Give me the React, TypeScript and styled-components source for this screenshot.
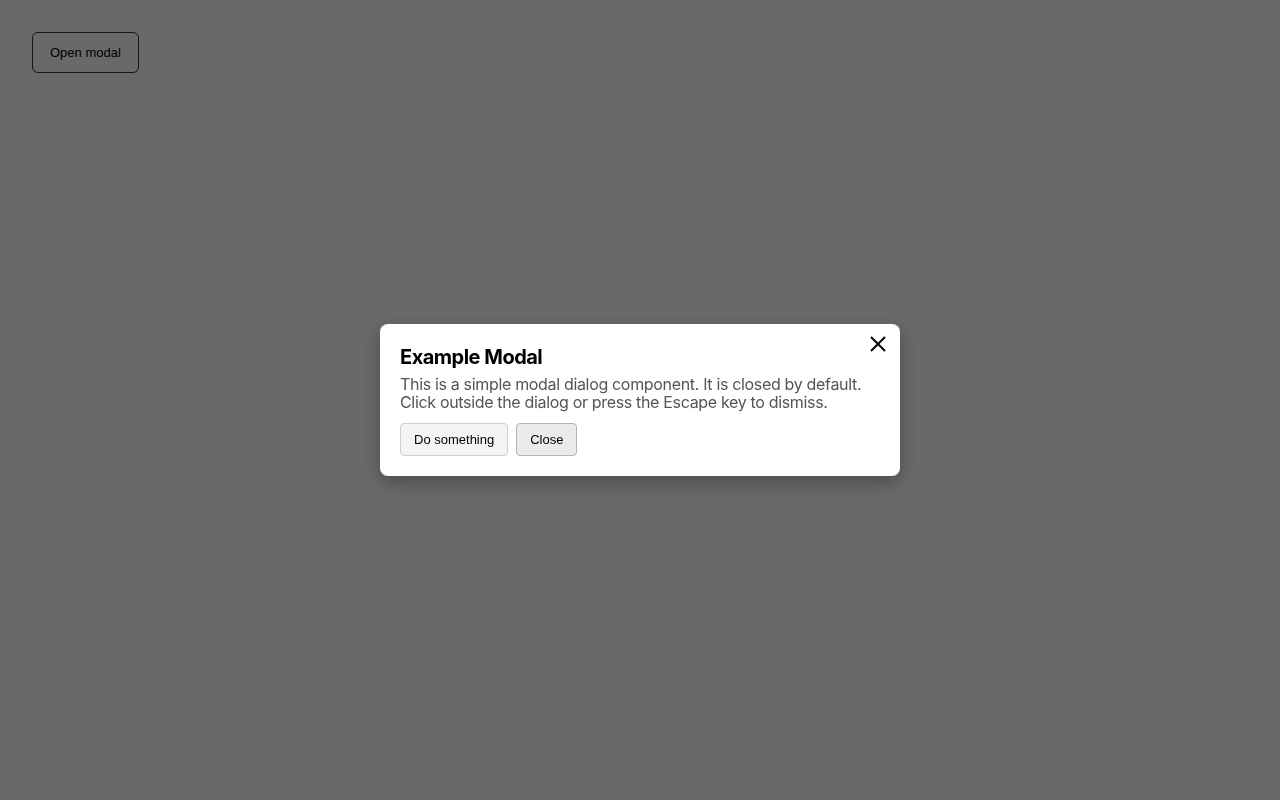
import styled, { createGlobalStyle } from "styled-components";

const Global = createGlobalStyle`
  html, body {
    margin: 0;
    padding: 0;
    height: 100%;
  }
  body {
    background: #ffffff;
    font-family: Inter, "Liberation Sans", sans-serif;
  }
`;

const Page = styled.div`
  position: relative;
  min-height: 800px;
  padding: 32px;
  box-sizing: border-box;
`;

const OpenButton = styled.button`
  height: 41px;
  padding: 0 17px;
  border: 1px solid #333;
  border-radius: 6px;
  background: #fff;
  color: #000;
  font-family: "Liberation Sans", Arial, sans-serif;
  font-size: 13px;
`;

const Backdrop = styled.div`
  position: fixed;
  inset: 0;
  background: rgba(0, 0, 0, 0.59);
  display: flex;
  align-items: center;
  justify-content: center;
`;

const Dialog = styled.div`
  position: relative;
  width: 520px;
  box-sizing: border-box;
  padding: 21px 20px 20px;
  background: #fff;
  border-radius: 8px;
  box-shadow: 0 6px 20px rgba(0, 0, 0, 0.3);
`;

const Title = styled.h2`
  margin: 0;
  font-size: 20px;
  line-height: 24px;
  font-weight: 700;
  color: #000;
  letter-spacing: -0.5px;
`;

const Body = styled.p`
  margin: 6px 0 12px;
  font-size: 16px;
  line-height: 18px;
  color: #555;
  letter-spacing: -0.33px;
`;

const Actions = styled.div`
  display: flex;
  gap: 8px;
`;

const ActionButton = styled.button<{ $pressed?: boolean }>`
  height: 33px;
  padding: 0 13px;
  border: 1px solid #cfcfcf;
  border-radius: 4px;
  background: ${(p) => (p.$pressed ? "#ebebeb" : "#f3f3f3")};
  border-color: ${(p) => (p.$pressed ? "#b5b5b5" : "#cfcfcf")};
  color: #000;
  font-family: "Liberation Sans", Arial, sans-serif;
  font-size: 13px;
`;

const CloseIcon = styled.button`
  position: absolute;
  top: 10px;
  right: 12px;
  width: 20px;
  height: 20px;
  padding: 0;
  border: none;
  background: none;
  display: flex;
  align-items: center;
  justify-content: center;
`;

export default function App() {
  return (
    <>
      <Global />
      <Page>
        <OpenButton>Open modal</OpenButton>
        <Backdrop>
          <Dialog role="dialog" aria-modal="true">
            <CloseIcon aria-label="Close">
              <svg width="16" height="16" viewBox="0 0 16 16">
                <path d="M1 1L15 15M15 1L1 15" stroke="#000" strokeWidth="2" />
              </svg>
            </CloseIcon>
            <Title>Example Modal</Title>
            <Body>
              This is a simple modal dialog component. It is closed by default.
              <br />
              Click outside the dialog or press the Escape key to dismiss.
            </Body>
            <Actions>
              <ActionButton>Do something</ActionButton>
              <ActionButton $pressed>Close</ActionButton>
            </Actions>
          </Dialog>
        </Backdrop>
      </Page>
    </>
  );
}
